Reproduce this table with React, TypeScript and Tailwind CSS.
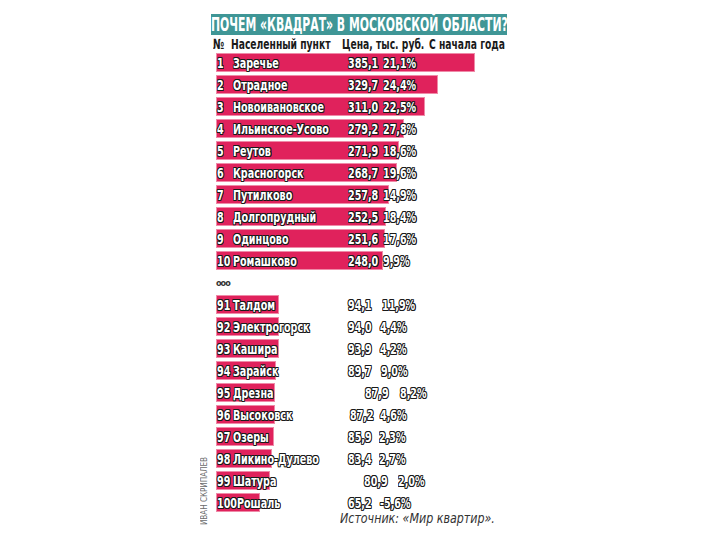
import React from 'react';

// Рейтинг цен на жильё в Подмосковье
type Row = {
  n: number;
  name: string;
  price: string;
  pct: string;
  shift?: number; // сдвиг колонки цены
  gap?: number; // ширина колонки цены
};

const topRows: Row[] = [
  { n: 1, name: 'Заречье', price: '385,1', pct: '21,1%' },
  { n: 2, name: 'Отрадное', price: '329,7', pct: '24,4%' },
  { n: 3, name: 'Новоивановское', price: '311,0', pct: '22,5%' },
  { n: 4, name: 'Ильинское-Усово', price: '279,2', pct: '27,8%' },
  { n: 5, name: 'Реутов', price: '271,9', pct: '18,6%' },
  { n: 6, name: 'Красногорск', price: '268,7', pct: '19,6%' },
  { n: 7, name: 'Путилково', price: '257,8', pct: '14,9%' },
  { n: 8, name: 'Долгопрудный', price: '252,5', pct: '18,4%' },
  { n: 9, name: 'Одинцово', price: '251,6', pct: '17,6%' },
  { n: 10, name: 'Ромашково', price: '248,0', pct: '9,9%' },
];

const bottomRows: Row[] = [
  { n: 91, name: 'Талдом', price: '94,1', pct: '11,9%', gap: 34 },
  { n: 92, name: 'Электрогорск', price: '94,0', pct: '4,4%', gap: 32 },
  { n: 93, name: 'Кашира', price: '93,9', pct: '4,2%', gap: 32 },
  { n: 94, name: 'Зарайск', price: '89,7', pct: '9,0%', gap: 33 },
  { n: 95, name: 'Дрезна', price: '87,9', pct: '8,2%', shift: 17, gap: 35 },
  { n: 96, name: 'Высоковск', price: '87,2', pct: '4,6%', shift: 2, gap: 30 },
  { n: 97, name: 'Озеры', price: '85,9', pct: '2,3%', gap: 31 },
  { n: 98, name: 'Ликино-Дулево', price: '83,4', pct: '2,7%', gap: 31 },
  { n: 99, name: 'Шатура', price: '80,9', pct: '2,0%', shift: 16, gap: 34 },
  { n: 100, name: 'Рошаль', price: '65,2', pct: '-5,6%', gap: 32 },
];

const toNum = (s: string) => parseFloat(s.replace(',', '.'));

const outline =
  'text-white [text-shadow:-1px_-1px_0_#1a1a1a,1px_-1px_0_#1a1a1a,-1px_1px_0_#1a1a1a,1px_1px_0_#1a1a1a,0_1px_0_#1a1a1a,0_-1px_0_#1a1a1a,1px_0_0_#1a1a1a,-1px_0_0_#1a1a1a]';

// узкое начертание: шрифт сжимаем по горизонтали
const Narrow: React.FC<{ children: React.ReactNode }> = ({ children }) => (
  <span className="inline-block origin-left scale-x-[0.76]">{children}</span>
);

const HeadCell: React.FC<{ children: React.ReactNode }> = ({ children }) => (
  <span className="inline-block origin-left scale-x-[0.73]">{children}</span>
);

const BarRow: React.FC<{ row: Row }> = ({ row }) => {
  const width = Math.round(toNum(row.price) * 0.6726);
  return (
    <div className="relative h-[22px] ml-[5px]">
      <div
        className="absolute left-0 top-0 h-[19px] bg-[#e0225c] border border-[#ef8aa8]"
        style={{ width }}
      />
      <div className={`relative flex h-[19px] items-center whitespace-nowrap text-[14px] font-bold leading-none ${outline}`}>
        <span className={row.n >= 100 ? 'w-[21px] pl-[1px]' : 'w-[17px] pl-[1px]'}>
          <Narrow>{row.n}</Narrow>
        </span>
        <span className={row.n >= 100 ? 'w-[111px]' : 'w-[115px]'}>
          <Narrow>{row.name}</Narrow>
        </span>
        <span style={{ marginLeft: row.shift ?? 0, width: row.gap ?? 35 }}>
          <Narrow>{row.price}</Narrow>
        </span>
        <span>
          <Narrow>{row.pct}</Narrow>
        </span>
      </div>
    </div>
  );
};

export default function App() {
  return (
    <div className="w-[720px] h-[539px] bg-white overflow-hidden font-['DejaVu_Sans_Condensed','Liberation_Sans',sans-serif]">
      <div className="flex ml-[201px] h-full">
        {/* подпись автора */}
        <div className="w-[10px] flex items-end pb-[14px]">
          <span className="[writing-mode:vertical-rl] rotate-180 text-[8px] leading-none text-[#6b6b6b] whitespace-nowrap">
            ИВАН СКРИПАЛЕВ
          </span>
        </div>

        <div className="flex flex-col pt-[14px]">
          <div className="w-[296px] h-[21px] bg-[#3f9696] flex items-center text-white font-bold text-[19px] leading-none whitespace-nowrap overflow-hidden">
            <span className="inline-block origin-left scale-x-[0.635]">ПОЧЕМ «КВАДРАТ» В МОСКОВСКОЙ ОБЛАСТИ?</span>
          </div>

          <div className="flex h-[18px] items-center text-[14px] font-semibold leading-none text-[#1a1a1a] whitespace-nowrap">
            <span className="w-[20px] pl-[2px]"><HeadCell>№</HeadCell></span>
            <span className="w-[111px]"><HeadCell>Населенный пункт</HeadCell></span>
            <span className="w-[87px]"><HeadCell>Цена, тыс. руб.</HeadCell></span>
            <span><HeadCell>С начала года</HeadCell></span>
          </div>

          {topRows.map((r) => (
            <BarRow key={r.n} row={r} />
          ))}

          <div className="h-[22px] ml-[5px] flex items-center text-[9px] font-bold tracking-[-1px] text-[#333]">ooo</div>

          {bottomRows.map((r) => (
            <BarRow key={r.n} row={r} />
          ))}

          <div className="-mt-[4px] pl-[129px] text-[14px] italic leading-none text-[#333] whitespace-nowrap">
            <span className="inline-block origin-left scale-x-[0.88]">Источник: «Мир квартир».</span>
          </div>
        </div>
      </div>
    </div>
  );
}
